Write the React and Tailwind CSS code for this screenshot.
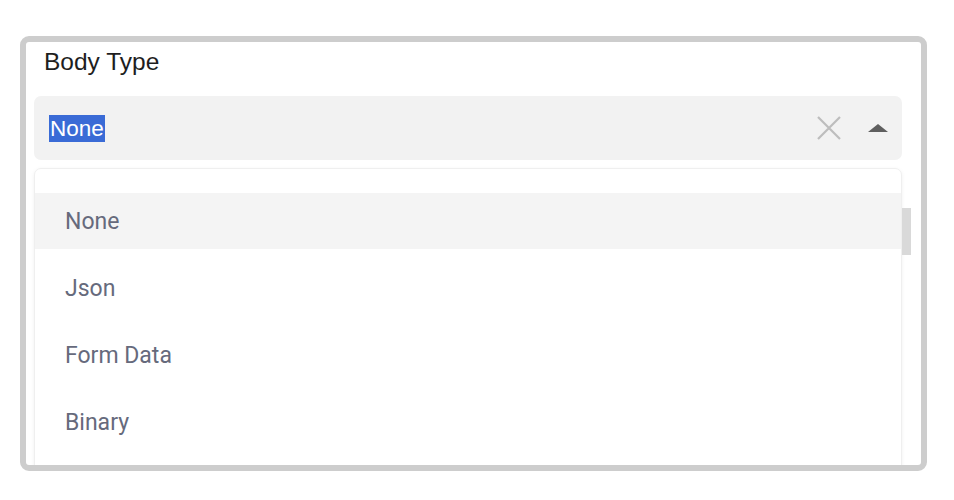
export default function App() {
  const options = ['None', 'Json', 'Form Data', 'Binary']

  return (
    <div className="h-[500px] w-[954px] bg-white pl-[20px] pt-[36px] font-['Roboto',sans-serif]">
      <div className="h-[435px] w-[907px] overflow-hidden rounded-[9px] border-[6px] border-[#cdcdcd] bg-white pl-[8px] pr-[19px]">
        <div className="pl-[10px] pt-[5px] font-['Liberation_Sans',Arial,sans-serif] text-[24.5px] leading-[30px] text-[#1e1e1e]">
          Body Type
        </div>

        <div className="mt-[19px] flex h-[64px] items-center rounded-[7px] bg-[#f2f2f2] pl-[15px] pr-[14px]">
          <span className="bg-[#3a6bd6] px-[1px] font-['Liberation_Sans',Arial,sans-serif] text-[22.5px] leading-[27px] text-white">
            None
          </span>
          <div className="flex-1" />
          <svg width="26" height="24" viewBox="0 0 26 24" className="mr-[26px]">
            <path d="M2 1 L24 23 M24 1 L2 23" stroke="#bdbdbd" strokeWidth="2.2" fill="none" />
          </svg>
          <svg width="20" height="8" viewBox="0 0 20 8">
            <path d="M10 0 L20 8 L0 8 Z" fill="#5f5f5f" />
          </svg>
        </div>

        <div className="relative mt-[8px] h-[320px] rounded-[7px] border border-[#efefef] bg-white pt-[24px] shadow-[0_1px_4px_rgba(0,0,0,0.06)]">
          <div className="absolute right-[-10px] top-[39px] h-[47px] w-[9px] bg-[#d9d9d9]" />
          {options.map((opt, i) => (
            <div
              key={opt}
              className={
                'flex h-[56px] items-center pl-[30px] pt-[2px] text-[23px] text-[#666a7c] ' +
                (i === 0 ? 'bg-[#f4f4f4]' : 'mt-[11px]')
              }
            >
              {opt}
            </div>
          ))}
        </div>
      </div>
    </div>
  )
}
